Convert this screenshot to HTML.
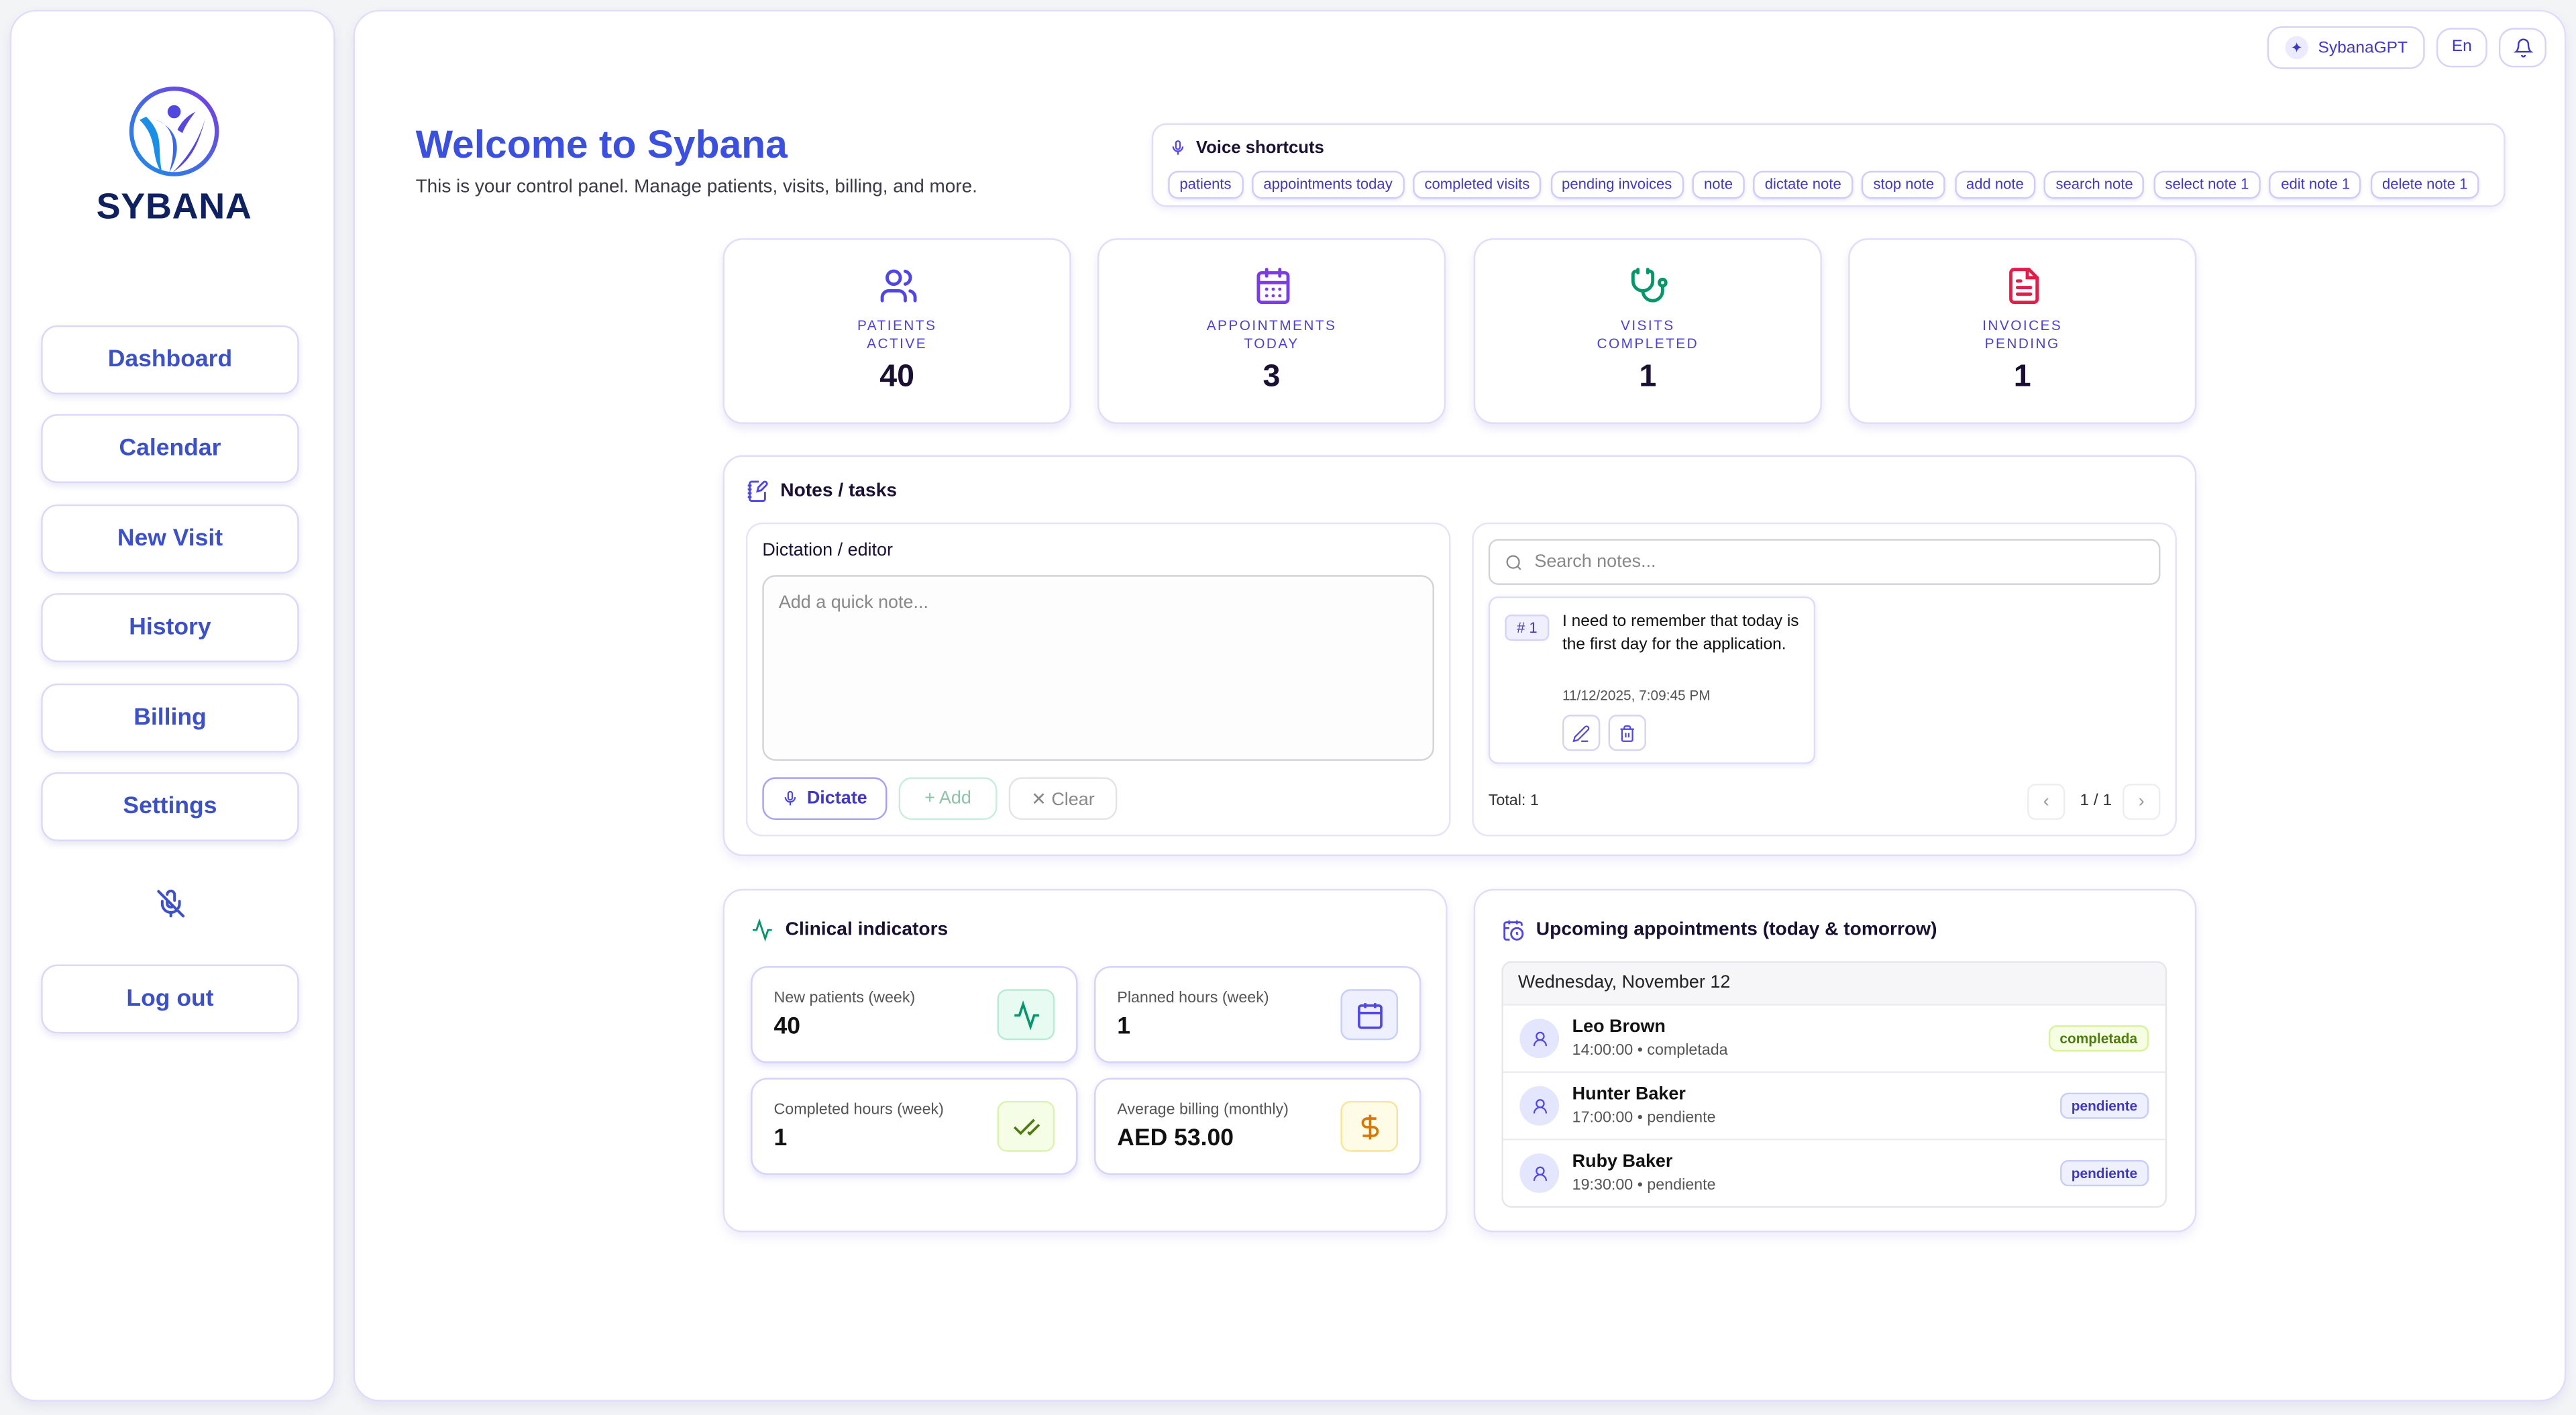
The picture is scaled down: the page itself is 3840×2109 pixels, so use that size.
<!DOCTYPE html>
<html><head><meta charset="utf-8"><style>
*{box-sizing:border-box;margin:0;padding:0}
html,body{width:3840px;height:2107px;overflow:hidden;background:#f3f4f6;font-family:"Liberation Sans",sans-serif}
#s{position:absolute;left:0;top:0;width:1568px;height:861px;transform:scale(2.44898);transform-origin:0 0}
.a{position:absolute}
.card{position:absolute;background:#fff;border:1px solid #e0dcfb;border-radius:14px;box-shadow:0 3px 6px rgba(120,110,200,.12)}
.nav{position:absolute;left:25px;width:157px;height:42px;background:#fff;border:1px solid #dcd8fa;border-radius:10px;box-shadow:0 2px 4px rgba(100,100,180,.15);color:#3b50c9;font-size:14.5px;font-weight:bold;display:flex;align-items:center;justify-content:center}
.chip{display:inline-block;border:1px solid #cfcbfa;border-radius:6px;padding:0 6px;height:17px;line-height:15px;font-size:9px;color:#3f37c9;margin-right:5.5px;box-shadow:0 1px 2px rgba(100,100,200,.15)}
.stat{position:absolute;top:145px;width:212px;height:113px;background:#fff;border:1px solid #e0dcfb;border-radius:12px;box-shadow:0 3px 5px rgba(120,110,200,.15);text-align:center}
.stat svg{position:absolute;left:94px;top:16px}
.lbl{position:absolute;top:47px;left:0;right:0;font-size:8.5px;letter-spacing:1px;color:#4a3fd6;line-height:11px}
.num{position:absolute;top:73px;left:0;right:0;font-size:19px;font-weight:bold;color:#1a1033}
.mini{position:absolute;width:199px;height:59px;background:#fff;border:1px solid #d6d3fb;border-radius:10px;box-shadow:0 2px 4px rgba(110,110,220,.18)}
.mini .t{position:absolute;left:13px;top:13px;font-size:9.5px;color:#555}
.mini .v{position:absolute;left:13px;top:28px;font-size:14.5px;font-weight:bold;color:#111}
.mini .ic{position:absolute;right:13px;top:13px;width:35px;height:31px;border-radius:6px;display:flex;align-items:center;justify-content:center}
.row{position:absolute;left:0;right:0;height:41px;border-top:1px solid #ececf0}
.av{position:absolute;left:10px;top:8px;width:24px;height:24px;border-radius:50%;background:#e4e6fd;display:flex;align-items:center;justify-content:center}
.nm{position:absolute;left:42px;top:7px;font-size:11px;font-weight:bold;color:#111}
.tm{position:absolute;left:42px;top:22px;font-size:9.5px;color:#555}
.bd{position:absolute;right:10px;top:12px;height:16px;line-height:14px;padding:0 6px;font-size:8.5px;font-weight:bold;border-radius:5px}
.btn{position:absolute;height:26px;border-radius:8px;border:1px solid #ddd;font-size:11px;display:flex;align-items:center;justify-content:center;gap:5px;background:#fff}
</style></head><body><div id="s">

<div class="card" style="left:6px;top:6px;width:198px;height:847px;border-radius:16px"></div>
<svg class="a" style="left:77px;top:51px" width="58" height="58" viewBox="0 0 58 58">
<defs><linearGradient id="g" x1="0" y1="1" x2="1" y2="0"><stop offset="0" stop-color="#1a8fe8"/><stop offset="1" stop-color="#7a3ae6"/></linearGradient></defs>
<circle cx="29" cy="29" r="26" fill="none" stroke="url(#g)" stroke-width="2.6"/>
<circle cx="29" cy="17" r="4" fill="#5046e0"/>
<path d="M8 22 C20 34 14 44 22 55 C18 40 24 32 12 20Z" fill="#1a8fe8"/>
<path d="M18 22 C30 26 30 40 26 54 C34 40 32 28 18 22Z" fill="#3a68e8"/>
<path d="M48 21 C44 34 38 44 28 54 C40 46 44 36 48 21Z" fill="#5646e4"/>
<path d="M42 17 C36 20 33 24 31 28 L34 30 C36 25 39 21 42 17Z" fill="#5646e4"/>
</svg>
<div class="a" style="left:40px;top:113px;width:132px;text-align:center;font-size:22px;font-weight:bold;color:#0f2160;letter-spacing:0.3px">SYBANA</div>
<div class="nav" style="top:198px">Dashboard</div>
<div class="nav" style="top:252px">Calendar</div>
<div class="nav" style="top:307px">New Visit</div>
<div class="nav" style="top:361px">History</div>
<div class="nav" style="top:416px">Billing</div>
<div class="nav" style="top:470px">Settings</div>
<svg class="a" style="left:95px;top:541px" width="18" height="18" viewBox="0 0 24 24" fill="none" stroke="#3b50c9" stroke-width="2.2" stroke-linecap="round"><path d="M2 2l20 20M9 9v3a3 3 0 0 0 5 2M15 9.3V5a3 3 0 0 0-6-.6M19 10v2a7 7 0 0 1-.9 3.4M5 10v2a7 7 0 0 0 12 5M12 19v3"/></svg>
<div class="nav" style="top:587px">Log out</div>

<div class="card" style="left:215px;top:6px;width:1347px;height:847px;border-radius:16px"></div>

<div class="a" style="left:1380px;top:16px;width:96px;height:26px;border:1px solid #d6d3fb;border-radius:9px;background:#fff;font-size:10px;color:#3f37c9;display:flex;align-items:center;padding-left:10px;gap:6px"><span style="display:inline-block;width:14px;height:14px;border-radius:50%;background:#eceafe;text-align:center;line-height:14px;font-size:9px">✦</span>SybanaGPT</div>
<div class="a" style="left:1483px;top:17px;width:31px;height:24px;border:1px solid #d6d3fb;border-radius:9px;font-size:10px;color:#3f37c9;text-align:center;line-height:22px">En</div>
<div class="a" style="left:1521px;top:17px;width:29px;height:24px;border:1px solid #d6d3fb;border-radius:9px;display:flex;align-items:center;justify-content:center"><svg width="12" height="12" viewBox="0 0 24 24" fill="none" stroke="#3f37c9" stroke-width="2"><path d="M6 8a6 6 0 0 1 12 0c0 7 3 9 3 9H3s3-2 3-9M10 21a2 2 0 0 0 4 0"/></svg></div>

<div class="a" style="left:253px;top:75px;font-size:24px;font-weight:bold;color:#3b4fe0">Welcome to Sybana</div>
<div class="a" style="left:253px;top:108px;font-size:11.4px;color:#3a3a46">This is your control panel. Manage patients, visits, billing, and more.</div>

<div class="a" style="left:701px;top:75px;width:824px;height:51px;border:1px solid #e0dcfb;border-radius:9px;background:#fff;box-shadow:0 2px 4px rgba(120,110,200,.1)">
<div class="a" style="left:10px;top:8px;font-size:10.5px;font-weight:bold;color:#1a1033;display:flex;gap:6px;align-items:center"><svg width="10" height="12" viewBox="0 0 24 24" fill="none" stroke="#4f46e5" stroke-width="2.2"><rect x="9" y="2" width="6" height="12" rx="3"/><path d="M5 10a7 7 0 0 0 14 0M12 17v5"/></svg>Voice shortcuts</div>
<div class="a" style="left:9px;top:26px;white-space:nowrap"><span class="chip">patients</span><span class="chip">appointments today</span><span class="chip">completed visits</span><span class="chip">pending invoices</span><span class="chip">note</span><span class="chip">dictate note</span><span class="chip">stop note</span><span class="chip">add note</span><span class="chip">search note</span><span class="chip">select note 1</span><span class="chip">edit note 1</span><span class="chip">delete note 1</span></div>
</div>

<div class="stat" style="left:440px"><svg width="24" height="24" viewBox="0 0 24 24" fill="none" stroke="#4f46e5" stroke-width="2" stroke-linecap="round"><circle cx="9" cy="7" r="4"/><path d="M2 21v-2a4 4 0 0 1 4-4h6a4 4 0 0 1 4 4v2M16 3.1a4 4 0 0 1 0 7.8M22 21v-2a4 4 0 0 0-3-3.9"/></svg><div class="lbl">PATIENTS<br>ACTIVE</div><div class="num">40</div></div>
<div class="stat" style="left:668px"><svg width="24" height="24" viewBox="0 0 24 24" fill="none" stroke="#7c3aed" stroke-width="2" stroke-linecap="round"><rect x="3" y="4" width="18" height="18" rx="2"/><path d="M16 2v4M8 2v4M3 10h18M8 14h.01M12 14h.01M16 14h.01M8 18h.01M12 18h.01M16 18h.01"/></svg><div class="lbl">APPOINTMENTS<br>TODAY</div><div class="num">3</div></div>
<div class="stat" style="left:897px"><svg width="24" height="24" viewBox="0 0 24 24" fill="none" stroke="#059669" stroke-width="2" stroke-linecap="round"><path d="M5 2v2M11 2v2M5 3H4a2 2 0 0 0-2 2v4a6 6 0 0 0 12 0V5a2 2 0 0 0-2-2h-1M8 15a6 6 0 0 0 12 0v-3"/><circle cx="20" cy="10" r="2"/></svg><div class="lbl">VISITS<br>COMPLETED</div><div class="num">1</div></div>
<div class="stat" style="left:1125px"><svg width="24" height="24" viewBox="0 0 24 24" fill="none" stroke="#e11d48" stroke-width="2" stroke-linecap="round"><path d="M15 2H6a2 2 0 0 0-2 2v16a2 2 0 0 0 2 2h12a2 2 0 0 0 2-2V7z"/><path d="M14 2v5h6M10 9H8M16 13H8M16 17H8"/></svg><div class="lbl">INVOICES<br>PENDING</div><div class="num">1</div></div>

<div class="card" style="left:440px;top:277px;width:897px;height:244px;border-radius:12px">
<div class="a" style="left:13px;top:14px;font-size:11.5px;font-weight:bold;color:#1a1033;display:flex;gap:7px;align-items:center"><svg width="14" height="14" viewBox="0 0 24 24" fill="none" stroke="#4f46e5" stroke-width="2"><path d="M13.4 2H6a2 2 0 0 0-2 2v16a2 2 0 0 0 2 2h12a2 2 0 0 0 2-2v-7.4M2 6h4M2 10h4M2 14h4M2 18h4M21.4 5.6a2 2 0 0 0-3-3L13 8l-1 4 4-1z"/></svg>Notes / tasks</div>
<div class="a" style="left:13px;top:40px;width:429px;height:191px;border:1px solid #e6e3fb;border-radius:10px">
<div class="a" style="left:9px;top:10px;font-size:11px;color:#1a1033">Dictation / editor</div>
<div class="a" style="left:9px;top:31px;width:409px;height:113px;border:1px solid #d4d4d8;border-radius:8px;background:#fdfdfe"><div class="a" style="left:9px;top:10px;font-size:11px;color:#888">Add a quick note...</div></div>
<div class="btn" style="left:9px;top:154px;width:76px;border-color:#a5a1f5;color:#3f37c9;font-weight:bold"><svg width="10" height="12" viewBox="0 0 24 24" fill="none" stroke="#4f46e5" stroke-width="2.2"><rect x="9" y="2" width="6" height="12" rx="3"/><path d="M5 10a7 7 0 0 0 14 0M12 17v5"/></svg>Dictate</div>
<div class="btn" style="left:92px;top:154px;width:60px;border-color:#c7eedc;color:#8cc4a5">+ Add</div>
<div class="btn" style="left:159px;top:154px;width:66px;border-color:#e4e4e7;color:#888">✕ Clear</div>
</div>
<div class="a" style="left:455px;top:40px;width:429px;height:191px;border:1px solid #e6e3fb;border-radius:10px">
<div class="a" style="left:9px;top:9px;width:409px;height:28px;border:1px solid #d4d4d8;border-radius:6px;font-size:11px;color:#888;display:flex;align-items:center;padding-left:9px;gap:7px"><svg width="11" height="11" viewBox="0 0 24 24" fill="none" stroke="#888" stroke-width="2"><circle cx="11" cy="11" r="8"/><path d="M21 21l-4-4"/></svg>Search notes...</div>
<div class="a" style="left:9px;top:44px;width:199px;height:102px;border:1px solid #dedbfb;border-radius:6px;box-shadow:0 1px 3px rgba(120,110,200,.15)">
<div class="a" style="left:9px;top:10px;width:27px;height:16px;border:1px solid #d6d3fb;background:#f0effe;border-radius:4px;font-size:9px;color:#3f37c9;text-align:center;line-height:14px">#&nbsp;1</div>
<div class="a" style="left:44px;top:8px;width:148px;font-size:10px;line-height:14px;color:#111">I need to remember that today is the first day for the application.</div>
<div class="a" style="left:44px;top:54px;font-size:8.5px;color:#555">11/12/2025, 7:09:45 PM</div>
<div class="a" style="left:44px;top:71px;width:23px;height:22px;border:1px solid #d6d3fb;border-radius:5px;display:flex;align-items:center;justify-content:center"><svg width="11" height="11" viewBox="0 0 24 24" fill="none" stroke="#4f46e5" stroke-width="2"><path d="M17 3a2.8 2.8 0 1 1 4 4L7.5 20.5 2 22l1.5-5.5zM12 22h9"/></svg></div>
<div class="a" style="left:72px;top:71px;width:23px;height:22px;border:1px solid #d6d3fb;border-radius:5px;display:flex;align-items:center;justify-content:center"><svg width="11" height="11" viewBox="0 0 24 24" fill="none" stroke="#4f46e5" stroke-width="2"><path d="M3 6h18M19 6v14a2 2 0 0 1-2 2H7a2 2 0 0 1-2-2V6M8 6V4a2 2 0 0 1 2-2h4a2 2 0 0 1 2 2v2M10 11v6M14 11v6"/></svg></div>
</div>
<div class="a" style="left:9px;top:163px;font-size:9.5px;color:#333">Total: 1</div>
<div class="a" style="left:337px;top:158px;width:23px;height:22px;border:1px solid #eee;border-radius:5px;color:#999;text-align:center;line-height:20px;font-size:11px">‹</div>
<div class="a" style="left:369px;top:163px;font-size:10px;color:#333">1 / 1</div>
<div class="a" style="left:395px;top:158px;width:23px;height:22px;border:1px solid #eee;border-radius:5px;color:#999;text-align:center;line-height:20px;font-size:11px">›</div>
</div>
</div>

<div class="card" style="left:440px;top:541px;width:441px;height:209px;border-radius:12px">
<div class="a" style="left:16px;top:17px;font-size:11.5px;font-weight:bold;color:#1a1033;display:flex;gap:7px;align-items:center"><svg width="14" height="14" viewBox="0 0 24 24" fill="none" stroke="#059669" stroke-width="2"><path d="M22 12h-4l-3 9L9 3l-3 9H2"/></svg>Clinical indicators</div>
<div class="mini" style="left:16px;top:46px"><div class="t">New patients (week)</div><div class="v">40</div><div class="ic" style="background:#e8fbf3;border:1px solid #b5ecd3"><svg width="18" height="18" viewBox="0 0 24 24" fill="none" stroke="#059669" stroke-width="2"><path d="M22 12h-4l-3 9L9 3l-3 9H2"/></svg></div></div>
<div class="mini" style="left:225px;top:46px"><div class="t">Planned hours (week)</div><div class="v">1</div><div class="ic" style="background:#eef0fe;border:1px solid #c9cdfb"><svg width="18" height="18" viewBox="0 0 24 24" fill="none" stroke="#4f46e5" stroke-width="2"><rect x="3" y="4" width="18" height="18" rx="2"/><path d="M16 2v4M8 2v4M3 10h18M8 14h.01M12 14h.01M16 14h.01M8 18h.01M12 18h.01"/></svg></div></div>
<div class="mini" style="left:16px;top:114px"><div class="t">Completed hours (week)</div><div class="v">1</div><div class="ic" style="background:#f6fde6;border:1px solid #dcf2b0"><svg width="18" height="18" viewBox="0 0 24 24" fill="none" stroke="#4d7c0f" stroke-width="2"><path d="M18 6 7 17l-5-5M22 10l-7.5 7.5L13 16"/></svg></div></div>
<div class="mini" style="left:225px;top:114px"><div class="t">Average billing (monthly)</div><div class="v">AED 53.00</div><div class="ic" style="background:#fefbe6;border:1px solid #f8e49a"><svg width="18" height="18" viewBox="0 0 24 24" fill="none" stroke="#d97706" stroke-width="2"><path d="M12 2v20M17 5H9.5a3.5 3.5 0 0 0 0 7h5a3.5 3.5 0 0 1 0 7H6"/></svg></div></div>
</div>

<div class="card" style="left:897px;top:541px;width:440px;height:209px;border-radius:12px">
<div class="a" style="left:16px;top:17px;font-size:11.5px;font-weight:bold;color:#1a1033;display:flex;gap:7px;align-items:center"><svg width="14" height="14" viewBox="0 0 24 24" fill="none" stroke="#4f46e5" stroke-width="2"><path d="M21 7.5V6a2 2 0 0 0-2-2H5a2 2 0 0 0-2 2v14a2 2 0 0 0 2 2h3.5M16 2v4M8 2v4M3 10h5"/><circle cx="16" cy="16" r="6"/><path d="M16 14v2l1 1"/></svg>Upcoming appointments (today &amp; tomorrow)</div>
<div class="a" style="left:16px;top:43px;width:405px;height:150px;border:1px solid #e6e6ea;border-radius:6px;overflow:hidden">
<div class="a" style="left:0;top:0;right:0;height:26px;background:#f6f6f8;font-size:11px;color:#222;padding:6px 9px">Wednesday, November 12</div>
<div class="row" style="top:25px"><div class="av"><svg width="11" height="11" viewBox="0 0 24 24" fill="none" stroke="#4f46e5" stroke-width="2"><circle cx="12" cy="8" r="5"/><path d="M20 21a8 8 0 0 0-16 0"/></svg></div><div class="nm">Leo Brown</div><div class="tm">14:00:00 • completada</div><div class="bd" style="background:#f5fde3;border:1px solid #d9f29b;color:#4d7c0f">completada</div></div>
<div class="row" style="top:66px"><div class="av"><svg width="11" height="11" viewBox="0 0 24 24" fill="none" stroke="#4f46e5" stroke-width="2"><circle cx="12" cy="8" r="5"/><path d="M20 21a8 8 0 0 0-16 0"/></svg></div><div class="nm">Hunter Baker</div><div class="tm">17:00:00 • pendiente</div><div class="bd" style="background:#eff0fe;border:1px solid #c9cdfb;color:#3f37c9">pendiente</div></div>
<div class="row" style="top:107px"><div class="av"><svg width="11" height="11" viewBox="0 0 24 24" fill="none" stroke="#4f46e5" stroke-width="2"><circle cx="12" cy="8" r="5"/><path d="M20 21a8 8 0 0 0-16 0"/></svg></div><div class="nm">Ruby Baker</div><div class="tm">19:30:00 • pendiente</div><div class="bd" style="background:#eff0fe;border:1px solid #c9cdfb;color:#3f37c9">pendiente</div></div>
</div>
</div>

</div></body></html>
